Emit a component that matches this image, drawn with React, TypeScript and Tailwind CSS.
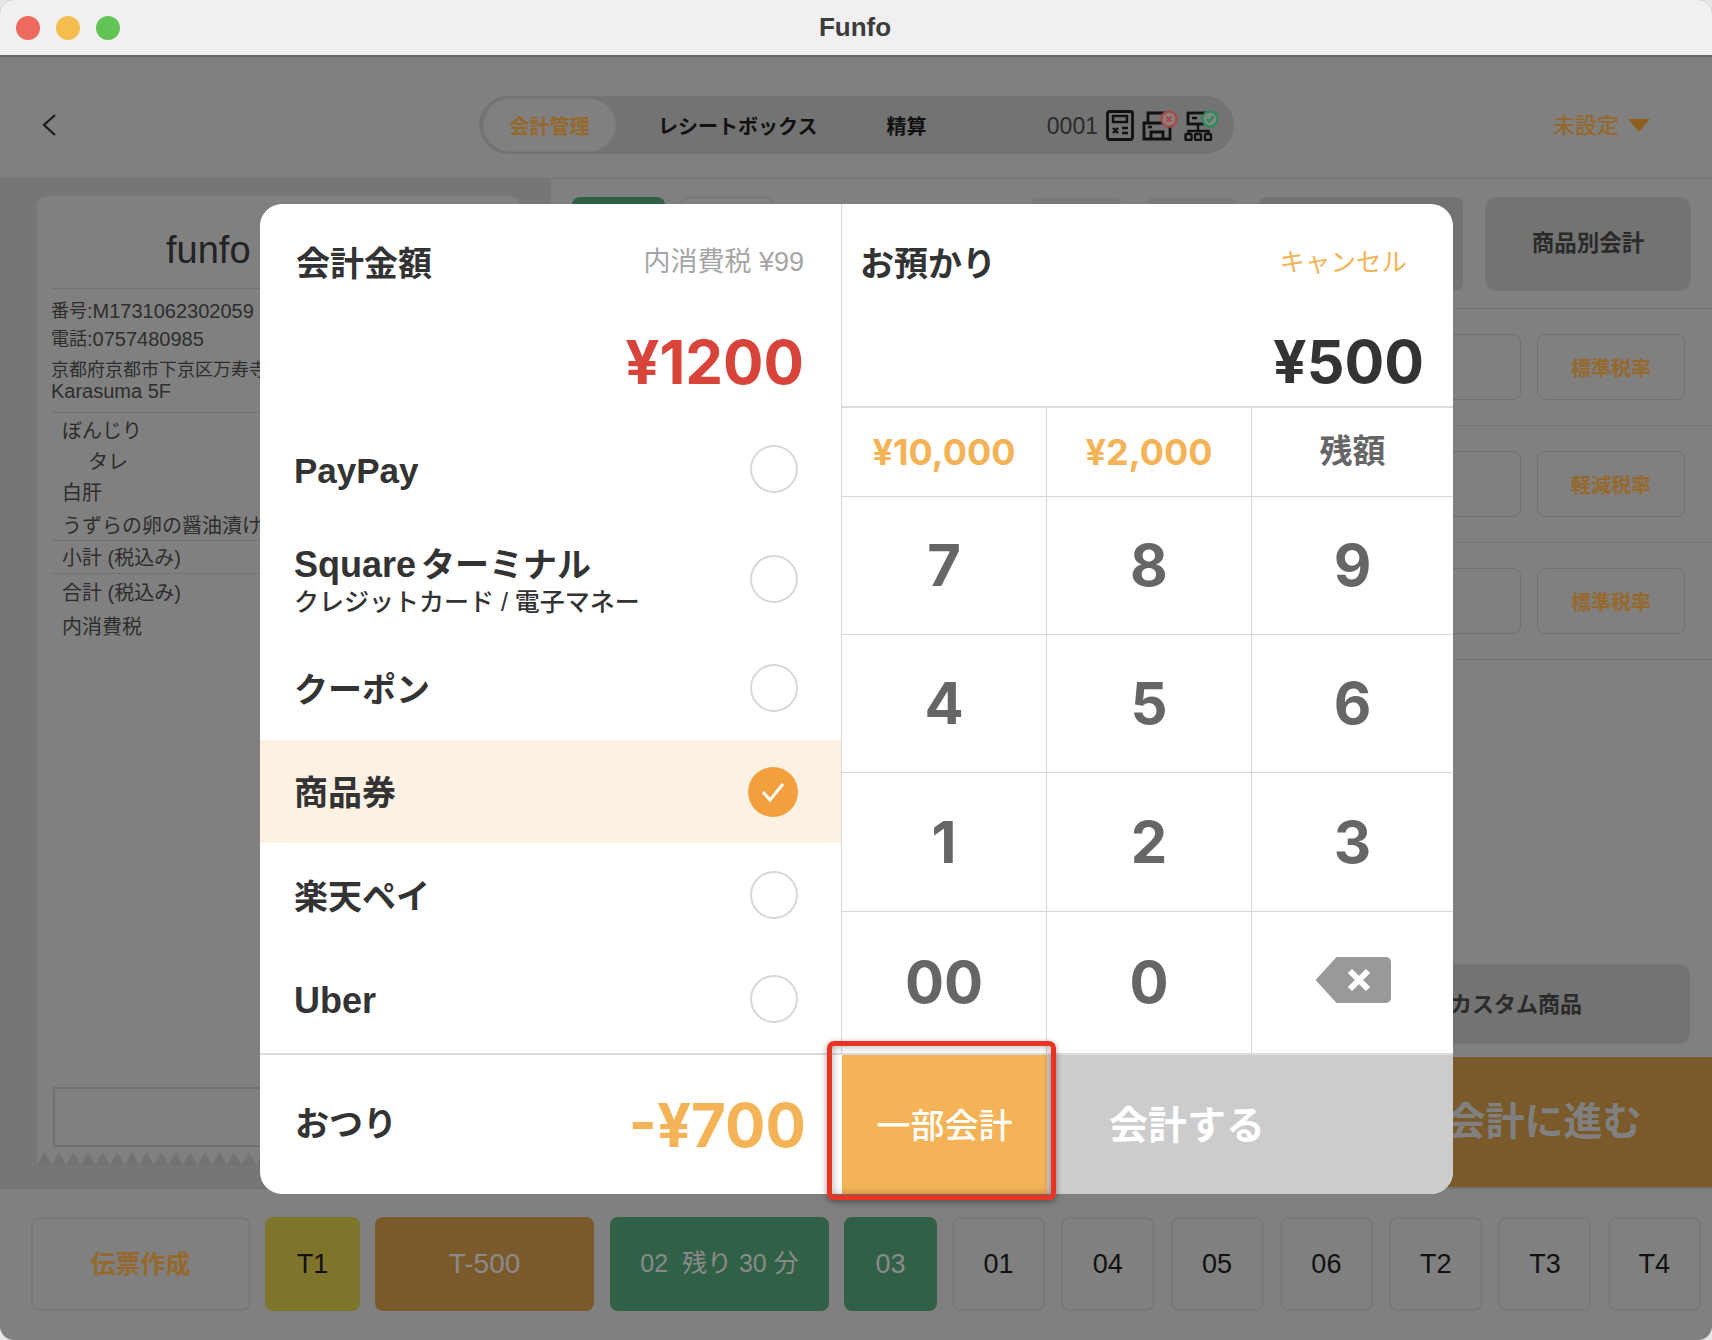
const sans = "font-['Liberation_Sans','Noto_Sans_CJK_JP',sans-serif]";

/* ---- icons in the status pill ---- */
function CalcIcon() {
  return (
    <svg width="28" height="31" viewBox="0 0 28 31" fill="none" stroke="#111" strokeWidth="2.8">
      <rect x="1.500" y="1.500" width="25" height="28" rx="2" />
      <rect x="7" y="6" width="14" height="6" strokeWidth="2.4" />
      <path d="M7 18l5 5M12 18l-5 5M16 18h6M16 23h6" strokeWidth="2.4" />
    </svg>
  );
}

function PrinterIcon() {
  return (
    <svg width="36" height="31" viewBox="0 0 36 31" fill="none">
      <path d="M6 12V3h18v9M2 13h26v16H2zM9 29v-7h12v7" stroke="#111" strokeWidth="2.8" />
      <path d="M6 17h4" stroke="#111" strokeWidth="2.6" />
      <circle cx="27" cy="9" r="7.500" fill="#8a8080" stroke="#a84a4a" strokeWidth="2.400" />
      <path d="M24.500 6.500l5 5M29.500 6.500l-5 5" stroke="#a84a4a" strokeWidth="2.400" />
    </svg>
  );
}

function NetworkIcon() {
  return (
    <svg width="34" height="31" viewBox="0 0 34 31" fill="none">
      <rect x="4" y="3" width="21" height="11" stroke="#111" strokeWidth="2.800" />
      <path d="M8 8h5M14 14v7M4.500 24v-3h20v3" stroke="#111" strokeWidth="2.400" />
      <rect x="1.500" y="24" width="6" height="6" rx="1" stroke="#111" strokeWidth="2.400" />
      <rect x="11" y="24" width="6" height="6" rx="1" stroke="#111" strokeWidth="2.400" />
      <rect x="21" y="24" width="6" height="6" rx="1" stroke="#111" strokeWidth="2.400" />
      <circle cx="26" cy="9" r="7.500" fill="#7f8a82" stroke="#2c8a5c" strokeWidth="2.400" />
      <path d="M22.500 9l2.600 2.600 4.400-5" stroke="#2c8a5c" strokeWidth="2.400" />
    </svg>
  );
}

function Zigzag() {
  return (
    <svg className="block w-full h-[13px]" aria-hidden>
      <defs>
        <pattern id="teeth" width="14.600" height="13" patternUnits="userSpaceOnUse">
          <path d="M0 13L7.300 0l7.300 13z" fill="#727272" />
        </pattern>
      </defs>
      <rect width="100%" height="13" fill="#808080" />
      <rect width="100%" height="13" fill="url(#teeth)" />
    </svg>
  );
}

/* ---- dimmed page behind the dialog ---- */
function Header() {
  return (
    <div className="h-[122px] shrink-0 flex items-center relative pt-[15px] border-b border-[#757575]">
      <svg className="ml-[41px]" width="16" height="24" viewBox="0 0 16 24" fill="none" stroke="#1a1a1a" strokeWidth="2.200">
        <path d="M14 2L3 12l11 10" />
      </svg>
      <div className="ml-[422px] w-[755px] h-[58px] rounded-full bg-[#737373] flex items-center pl-[4px] pr-[16px] text-[20px] font-bold text-[#111]">
        <div className="w-[133px] h-[54px] rounded-full bg-[#808080] border border-[#7a7a7a] flex items-center justify-center pt-[4px] text-[#96682c]">
          会計管理
        </div>
        <span className="ml-[42px] pt-[4px]">レシートボックス</span>
        <span className="ml-[69px] pt-[4px]">精算</span>
        <span className="ml-auto mr-[8px] pt-[2px] text-[23px] font-normal text-[#2a2a2a]">0001</span>
        <CalcIcon />
        <span className="ml-[8px]"><PrinterIcon /></span>
        <span className="ml-[6px]"><NetworkIcon /></span>
      </div>
      <div className="ml-auto mr-[62px] flex items-center gap-[9px] text-[22px] font-medium text-[#96682c]">
        未設定
        <span className="w-0 h-0 border-x-[11px] border-x-transparent border-t-[13px] border-t-[#8f5f20]" />
      </div>
    </div>
  );
}

function Receipt() {
  const items = [
    { t: "ぼんじり", h: "h-[34px]", x: "pl-[11px]" },
    { t: "タレ", h: "h-[27px]", x: "pl-[37px] text-[18px]" },
    { t: "白肝", h: "h-[35px]", x: "pl-[11px]" },
    { t: "うずらの卵の醤油漬け", h: "h-[32px]", x: "pl-[11px] border-b border-[#737373]" },
    { t: "小計 (税込み)", h: "h-[33px]", x: "pl-[11px] border-b border-[#737373]" },
    { t: "合計 (税込み)", h: "h-[35px]", x: "pl-[11px]" },
    { t: "内消費税", h: "h-[34px]", x: "pl-[11px]" },
  ];
  return (
    <div className="ml-[37px] w-[483px] mt-[17px] h-[969px] flex flex-col">
      <div className="flex-1 flex flex-col bg-[#808080] rounded-t-[10px] px-[14px] text-[#2d2d2d]">
        <div className="h-[93px] shrink-0 pl-[115px] pt-[16px] flex items-center text-[38px] text-[#222] border-b border-[#737373]">
          funfo
        </div>
        <div className="h-[124px] shrink-0 pt-[8px] text-[18px] leading-[21px] border-b border-[#737373] whitespace-nowrap overflow-hidden">
          <div className="h-[29px] flex items-center">番号<span className="text-[20px]">:M1731062302059</span></div>
          <div className="h-[27px] flex items-center">電話<span className="text-[20px]">:0757480985</span></div>
          <div className="mt-[7px]">京都府京都市下京区万寿寺中</div>
          <div className="text-[20px]">Karasuma 5F</div>
        </div>
        {items.map((r) => (
          <div key={r.t} className={`${r.h} ${r.x} shrink-0 pt-[2px] flex items-center text-[20px] whitespace-nowrap`}>
            {r.t}
          </div>
        ))}
        <div className="mt-auto mb-[5px] ml-[2px] h-[60px] border-2 border-[#707070]" />
      </div>
      <Zigzag />
    </div>
  );
}

function TaxRow({ label }: { label: string }) {
  return (
    <div className="h-[117px] shrink-0 border-b border-[#757575] flex items-center justify-end gap-[16px] pr-[27px]">
      <div className="w-[200px] h-[66px] rounded-[8px] border border-[#707070]" />
      <div className="w-[148px] h-[66px] rounded-[8px] border border-[#707070] flex items-center justify-center pt-[4px] text-[20px] font-bold text-[#96682c]">
        {label}
      </div>
    </div>
  );
}

function RightPane() {
  return (
    <div className="flex-1 flex flex-col mt-[2px]">
      <div className="h-[128px] shrink-0 border-b border-[#757575] pt-[16px] pl-[21px] pr-[21px] flex items-start text-[22.500px] font-bold text-[#2a2a2a]">
        <div className="w-[93px] h-[94px] rounded-[8px] bg-[#306146]" />
        <div className="ml-[16px] w-[93px] h-[94px] rounded-[8px] border border-[#707070]" />
        <div className="ml-auto w-[91px] h-[94px] rounded-[8px] bg-[#7a7a7a]" />
        <div className="ml-[23px] w-[90px] h-[94px] rounded-[8px] bg-[#7a7a7a]" />
        <div className="ml-[24px] w-[204px] h-[94px] rounded-[8px] bg-[#737373]" />
        <div className="ml-[22px] w-[206px] h-[94px] rounded-[12px] bg-[#737373] flex items-center justify-center">
          商品別会計
        </div>
      </div>
      <TaxRow label="標準税率" />
      <TaxRow label="軽減税率" />
      <TaxRow label="標準税率" />
      <div className="flex-1 flex flex-col items-end">
        <div className="mt-auto mr-[22px] w-[390px] h-[80px] rounded-[12px] bg-[#737373] flex items-center justify-end pr-[108px] text-[22px] font-bold text-[#2a2a2a]">
          カスタム商品
        </div>
        <div className="mt-[13px] w-[336px] h-[130px] bg-[#7a5a2b] flex items-center justify-center text-[39px] font-bold text-[#808080]">
          会計に進む
        </div>
      </div>
    </div>
  );
}

function TableBar() {
  const plain = ["01", "04", "05", "06", "T2", "T3", "T4"];
  return (
    <div className="flex-1 flex items-start pt-[28px] pl-[31px] border-t-2 border-[#737373] text-[27px]">
      <div className="w-[219px] h-[94px] rounded-[8px] border-2 border-[#787878] flex items-center justify-center pt-[2px] text-[25px] font-bold text-[#96682c]">
        伝票作成
      </div>
      <div className="ml-[15px] w-[95px] h-[94px] rounded-[8px] bg-[#7f742b] flex items-center justify-center text-[#111]">T1</div>
      <div className="ml-[15px] w-[219px] h-[94px] rounded-[8px] bg-[#7a5a2b] flex items-center justify-center text-[28px] text-[#8a8a8a]">T-500</div>
      <div className="ml-[16px] w-[219px] h-[94px] rounded-[8px] bg-[#306146] flex items-center justify-center text-[25px] text-[#8a8a8a]">
        02&nbsp;&nbsp;残り 30 分
      </div>
      <div className="ml-[15px] w-[93px] h-[94px] rounded-[8px] bg-[#306146] flex items-center justify-center text-[#8a8a8a]">03</div>
      <div className="ml-[15px] flex gap-[16.300px]">
        {plain.map((n) => (
          <div key={n} className="w-[93px] h-[94px] rounded-[8px] border-2 border-[#787878] flex items-center justify-center text-[#111]">
            {n}
          </div>
        ))}
      </div>
    </div>
  );
}

/* ---- dialog ---- */
const payments = [
  { key: "paypay", h: "h-[104px]", label: <span className="text-[35px]">PayPay</span> },
  {
    key: "square",
    h: "h-[115px]",
    label: (
      <div>
        <div className="text-[34px] leading-[42px]">
          <span className="text-[36px] mr-[5px]">Square</span>ターミナル
        </div>
        <div className="text-[25px] leading-[32px] font-medium">クレジットカード / 電子マネー</div>
      </div>
    ),
  },
  { key: "coupon", h: "h-[104px]", label: <span className="text-[34px]">クーポン</span> },
  { key: "gift", h: "h-[103px]", label: <span className="text-[34px]">商品券</span>, active: true },
  { key: "rakuten", h: "h-[104px]", label: <span className="text-[34px]">楽天ペイ</span> },
  { key: "uber", h: "h-[104px]", label: <span className="text-[36px]">Uber</span> },
];

function Radio({ on }: { on?: boolean }) {
  if (on) {
    return (
      <div className="w-[50px] h-[50px] rounded-full bg-[#f2a03d] flex items-center justify-center">
        <svg width="26" height="22" viewBox="0 0 26 22" fill="none" stroke="#fff" strokeWidth="3">
          <path d="M3 11l7 8L23 3" />
        </svg>
      </div>
    );
  }
  return <div className="w-[48px] h-[48px] rounded-full border-2 border-[#d8d8d8]" />;
}

const keys = ["7", "8", "9", "4", "5", "6", "1", "2", "3", "00", "0"];

function Keypad() {
  return (
    <div className="flex-1 grid grid-cols-[205px_205px_1fr] grid-rows-[89px_138px_138px_139px_1fr] font-['Inter',sans-serif] font-bold">
      <div className="flex items-center justify-center border-r border-b border-[#d8d8d8] text-[36px] text-[#f3b356]">¥10,000</div>
      <div className="flex items-center justify-center border-r border-b border-[#d8d8d8] text-[36px] text-[#f3b356]">¥2,000</div>
      <div className={`flex items-center justify-center border-b border-[#d8d8d8] text-[33px] text-[#666] ${sans}`}>残額</div>
      {keys.map((k, i) => (
        <div
          key={k}
          className={`flex items-center justify-center text-[58px] text-[#666] border-[#d8d8d8] ${i < 9 ? "border-b" : ""} ${i % 3 !== 2 ? "border-r" : ""}`}
        >
          {k}
        </div>
      ))}
      <div className="flex items-center justify-center pb-[5px]">
        <svg width="76" height="46" viewBox="0 0 76 46" fill="none">
          <path d="M22 1h49a4 4 0 0 1 4 4v36a4 4 0 0 1-4 4H22L2 23z" fill="#999" stroke="#999" strokeWidth="2" strokeLinejoin="round" />
          <path d="M35 14l18 18M53 14L35 32" stroke="#fff" strokeWidth="6" />
        </svg>
      </div>
    </div>
  );
}

function Dialog() {
  return (
    <div className={`absolute left-[260px] top-[204px] w-[1193px] h-[990px] rounded-[22px] overflow-hidden bg-white flex flex-col text-[#333] ${sans}`}>
      <div className="flex-1 flex min-h-0">
        <div className="w-[582px] shrink-0 border-r border-[#d8d8d8] flex flex-col">
          <div className="h-[213px] shrink-0 pl-[36px] pr-[37px] pt-[33px]">
            <div className="flex items-center justify-between h-[50px]">
              <span className="text-[34px] font-bold pt-[4px]">会計金額</span>
              <span className="text-[27px] text-[#a5a5a5]">内消費税 ¥99</span>
            </div>
            <div className="mt-[45px] text-right font-['Inter',sans-serif] text-[60px] leading-[60px] font-bold text-[#d8433a]">¥1200</div>
          </div>
          {payments.map((p) => (
            <div
              key={p.key}
              className={`${p.h} shrink-0 flex items-center justify-between pl-[34px] pr-[43px] font-bold ${p.active ? "bg-[#fdf1e3]" : ""}`}
            >
              <div className="pt-[4px]">{p.label}</div>
              <Radio on={p.active} />
            </div>
          ))}
        </div>
        <div className="flex-1 min-w-0 flex flex-col">
          <div className="h-[204px] shrink-0 border-b-2 border-[#dcdcdc] pl-[18px] pr-[29px] pt-[33px]">
            <div className="flex items-center justify-between h-[50px] pr-[17px]">
              <span className="text-[34px] font-bold pt-[4px]">お預かり</span>
              <span className="text-[25.500px] text-[#f3b356]">キャンセル</span>
            </div>
            <div className="mt-[45px] text-right font-['Inter',sans-serif] text-[59px] leading-[60px] font-bold">¥500</div>
          </div>
          <Keypad />
        </div>
      </div>
      <div className="h-[141px] shrink-0 flex border-t-2 border-[#dcdcdc]">
        <div className="w-[582px] flex items-center justify-between pl-[35px] pr-[36px] font-bold">
          <span className="text-[34px]">おつり</span>
          <span className="font-['Inter',sans-serif] text-[60px] text-[#f3b356]">-¥700</span>
        </div>
        <div className="w-[205px] bg-[#f3b356] flex items-center justify-center pt-[4px] text-[34px] font-medium text-white">一部会計</div>
        <div className="flex-1 bg-[#cccccc] flex items-center pl-[62px] pt-[4px] text-[39px] font-bold text-white rounded-br-[22px]">会計する</div>
      </div>
    </div>
  );
}

export default function App() {
  return (
    <div className={`relative w-[1712px] h-[1340px] overflow-hidden bg-[#e6e6e6] ${sans}`}>
      <div className="w-full h-full rounded-[14px] overflow-hidden flex flex-col bg-[#808080]">
        <div className="h-[57px] shrink-0 bg-[#f0f0f0] border-b-2 border-[#666] flex items-center relative">
          <div className="ml-[16px] flex gap-[16px]">
            <span className="w-[24px] h-[24px] rounded-full bg-[#ee6a5f]" />
            <span className="w-[24px] h-[24px] rounded-full bg-[#f5bd4f]" />
            <span className="w-[24px] h-[24px] rounded-full bg-[#61c454]" />
          </div>
          <div className="absolute inset-x-0 pr-[2px] text-center text-[26px] font-bold text-[#3c3c3c]">Funfo</div>
        </div>
        <Header />
        <div className="h-[1008px] shrink-0 flex">
          <div className="w-[551px] shrink-0 bg-[#767676]">
            <Receipt />
          </div>
          <RightPane />
        </div>
        <TableBar />
      </div>
      <Dialog />
      {/* red callout around the partial-payment button */}
      <div className="absolute left-[827px] top-[1041px] w-[229px] h-[159px] rounded-[7px] border-[5px] border-[#ea3323] shadow-[0_2px_6px_rgba(0,0,0,0.4),inset_0_0_8px_rgba(0,0,0,0.35)]" />
    </div>
  );
}
